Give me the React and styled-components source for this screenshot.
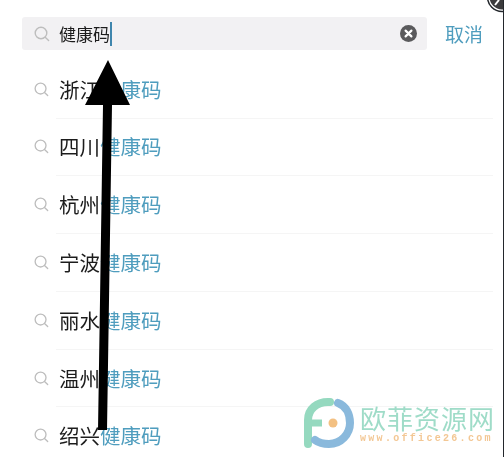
import styled, { createGlobalStyle } from 'styled-components'

const Global = createGlobalStyle`
  html, body { margin: 0; padding: 0; background: #fff; }
  body { width: 504px; height: 457px; overflow: hidden; }
`

const cities = ['浙江', '四川', '杭州', '宁波', '丽水', '温州', '绍兴']

const SearchIcon = ({ size = 16 }) => (
  <svg width={size} height={size} viewBox="0 0 16 16" fill="none">
    <circle cx="7" cy="7" r="5.8" stroke="#bdbdbd" strokeWidth="1.4" />
    <path d="M11.2 11.2 14.6 14.4" stroke="#bdbdbd" strokeWidth="1.4" strokeLinecap="round" />
  </svg>
)

export default function App() {
  return (
    <Page>
      <Global />
      <Header>
        <SearchBox>
          <SearchIcon />
          <Query>健康码</Query>
          <Caret />
          <Clear>
            <svg width="17" height="17" viewBox="0 0 17 17">
              <circle cx="8.5" cy="8.5" r="8.5" fill="#5a5a5c" />
              <path d="M5.6 5.6 11.4 11.4M11.4 5.6 5.6 11.4" stroke="#fff" strokeWidth="2.2" strokeLinecap="round" />
            </svg>
          </Clear>
        </SearchBox>
        <Cancel>取消</Cancel>
      </Header>
      <List>
        {cities.map((city) => (
          <Row key={city}>
            <SearchIcon size={15} />
            <RowText>
              {city}<Hit>健康码</Hit>
            </RowText>
          </Row>
        ))}
      </List>
      <Arrow width="504" height="457" viewBox="0 0 504 457">
        <path d="M98 430 103 105 85 105 108 60 130 105 112 105 107 430Z" fill="#000" />
      </Arrow>
      <Corner width="16" height="14" viewBox="0 0 16 14">
        <circle cx="15" cy="-3" r="13.5" fill="#3a3a3c" stroke="#fff" strokeWidth="2" />
        <circle cx="15" cy="-3" r="14.5" fill="none" stroke="#23272c" strokeWidth="1.5" />
        <path d="M8 5 12 0" stroke="#fff" strokeWidth="2" />
      </Corner>
      <Watermark>
        <svg width="52" height="52" viewBox="0 0 52 52" fill="none">
          <path d="M4 46V22C4 11 13 4 24 4H26" stroke="#95d9bf" strokeWidth="8" strokeLinecap="round" />
          <path d="M4 25H18" stroke="#95d9bf" strokeWidth="7" />
          <path d="M34 5C42 8 46 16 46 25 46 36 37 46 25 46 20 46 15 45 11 42" stroke="#8ab9dc" strokeWidth="8" strokeLinecap="round" />
          <circle cx="29" cy="25" r="4.5" fill="#f3c082" />
        </svg>
        <Brand>
          <BrandName>欧菲资源网</BrandName>
          <BrandUrl>www.office26.com</BrandUrl>
        </Brand>
      </Watermark>
    </Page>
  )
}

const Page = styled.div`
  position: relative;
  width: 504px;
  height: 457px;
  overflow: hidden;
  background: #fff;
  font-family: "Noto Sans CJK SC", "Liberation Sans", sans-serif;
  border-right: 1px solid #23272c;
  box-sizing: border-box;
  filter: blur(0.4px);
`

const Header = styled.div`
  display: flex;
  align-items: center;
  gap: 18px;
  padding: 17px 20px 0 22px;
`

const SearchBox = styled.div`
  flex: 1;
  height: 33px;
  display: flex;
  align-items: center;
  padding: 0 10px 0 12px;
  background: #f2f1f3;
  border-radius: 3px;
`

const Query = styled.span`
  margin-left: 9px;
  font-size: 17px;
  color: #1c1c1c;
`

const Caret = styled.span`
  width: 2px;
  height: 24px;
  background: #3f86ad;
`

const Clear = styled.span`
  margin-left: auto;
  display: flex;
`

const Cancel = styled.span`
  font-size: 19px;
  color: #4f9dbe;
`

const List = styled.div`
  padding: 10px 0 0 34px;
`

const Row = styled.div`
  display: flex;
  align-items: center;
  gap: 7px;
  height: 57.8px;
  &:first-child { height: 58px; }
`

const RowText = styled.span`
  flex: 1;
  height: 100%;
  display: flex;
  align-items: center;
  margin-right: 10px;
  padding-left: 3px;
  font-size: 20.5px;
  color: #1c1c1c;
  border-bottom: 1px solid #f5f5f5;
`

const Hit = styled.span`
  color: #4f9dbe;
`

const Arrow = styled.svg`
  position: absolute;
  inset: 0;
`

const Corner = styled.svg`
  position: absolute;
  top: 0;
  right: 0;
`

const Watermark = styled.div`
  position: absolute;
  left: 304px;
  top: 398px;
  display: flex;
  align-items: flex-start;
  gap: 4px;
`

const Brand = styled.div`
  display: flex;
  flex-direction: column;
  padding-top: 7px;
`

const BrandName = styled.span`
  font-size: 26px;
  line-height: 26px;
  letter-spacing: 1px;
  color: #9fdcc8;
`

const BrandUrl = styled.span`
  font-family: "Liberation Mono", monospace;
  font-size: 10px;
  font-weight: 700;
  line-height: 12px;
  margin-top: 2px;
  letter-spacing: 2.3px;
  white-space: nowrap;
  color: #f3c794;
`
